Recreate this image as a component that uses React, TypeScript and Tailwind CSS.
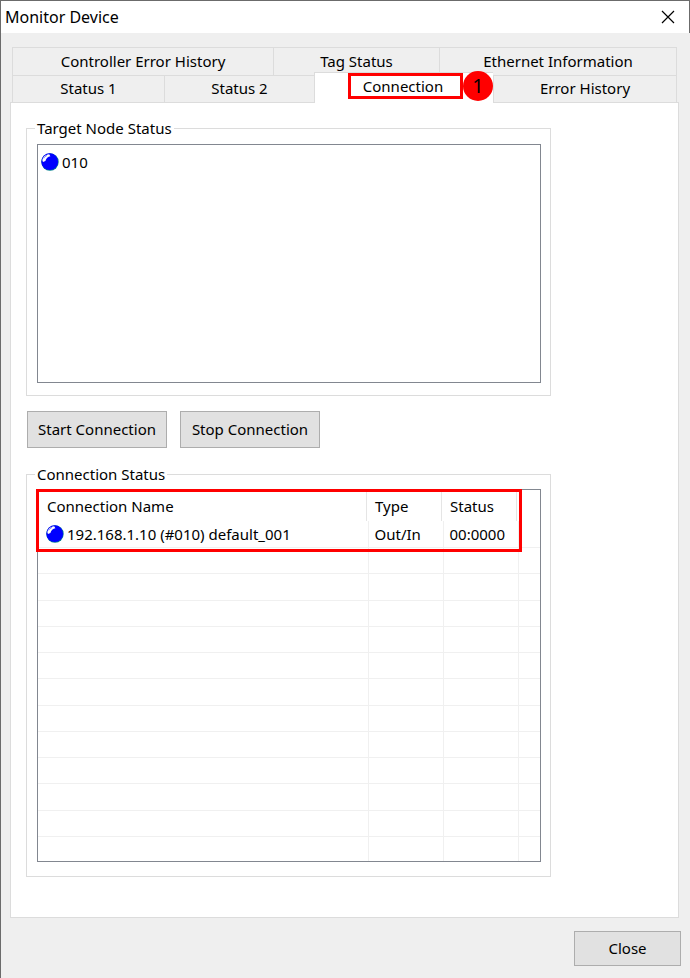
import { useState } from 'react';

const topTabs = ['Controller Error History', 'Tag Status', 'Ethernet Information'];
const bottomTabs = ['Status 1', 'Status 2', 'Connection', 'Error History'];

const nodes = ['010'];

const connections = [
  { name: '192.168.1.10 (#010) default_001', type: 'Out/In', status: '00:0000' },
];

const EMPTY_ROWS = 12;

const StatusBall = () => (
  <svg viewBox="0 0 18 18" className="w-[18px] h-[18px] shrink-0" aria-hidden="true">
    <circle cx="9" cy="9" r="8.7" fill="#007f8c" />
    <circle cx="8.7" cy="8.7" r="8.4" fill="#0000ff" />
    <path d="M1.4 7.6C1.6 4.2 4.2 1.6 8.2 1.3L9.4 3.2C7 3.4 5 5.4 4.4 8L2 9Z" fill="#fff" />
    <path d="M2.8 5.4C3.4 4 4.4 3 6 2.5" fill="none" stroke="#0000ff" strokeWidth="0.5" />
  </svg>
);

type TabProps = {
  label: string;
  selected: boolean;
  onSelect: () => void;
};

const Tab = ({ label, selected, onSelect }: TabProps) => (
  <button
    type="button"
    role="tab"
    aria-selected={selected}
    onClick={onSelect}
    className={
      selected
        ? 'relative z-10 -mt-[3px] -mb-px pb-[5px] pr-[2px] border-t border-l border-[#dcdcdc] bg-white whitespace-nowrap'
        : 'pb-[2px] border-t border-l border-[#dcdcdc] bg-[#efefef] whitespace-nowrap'
    }
  >
    {label}
  </button>
);

const App = () => {
  const [active, setActive] = useState('Connection');

  return (
    <div className="min-h-screen bg-[#efefef] border-t border-l border-[#6b6b6b] text-black text-[15px] leading-5 font-['Noto_Sans','Open_Sans',sans-serif]">
      <header className="flex items-center justify-between h-8 pl-1 pr-[14px] bg-white border-r border-[#6b6b6b]">
        <h1 className="pb-px text-base leading-5">Monitor Device</h1>
        <button type="button" aria-label="Close window">
          <svg viewBox="0 0 14 14" className="w-[14px] h-[14px]" fill="none" stroke="#000" strokeWidth="1.2">
            <path d="M1 1L13 13M13 1L1 13" />
          </svg>
        </button>
      </header>

      <main className="pt-[14px] pl-[9px] pr-[11px]">
        <div role="tablist" className="mx-[2px]">
          <div className="grid grid-cols-[261fr_166fr_237fr] h-7 border-r border-[#dcdcdc]">
            {topTabs.map((tab) => (
              <Tab key={tab} label={tab} selected={active === tab} onSelect={() => setActive(tab)} />
            ))}
          </div>
          <div className="relative grid grid-cols-[152fr_150fr_179fr_183fr] h-[27px] border-r border-[#dcdcdc]">
            {bottomTabs.map((tab) => (
              <Tab key={tab} label={tab} selected={active === tab} onSelect={() => setActive(tab)} />
            ))}
            {/* callout around the Connection tab */}
            <div className="absolute z-20 -top-[2px] left-[336px] w-[115px] h-[26px] border-3 border-[#ff0000] pointer-events-none" />
            <div className="absolute z-20 -top-[4px] left-[451px] flex items-center justify-center w-[30px] h-[30px] rounded-full bg-[#ff0000] text-xl leading-[30px] pointer-events-none">
              1
            </div>
          </div>
        </div>

        <section role="tabpanel" className="bg-white border border-[#dcdcdc] px-[15px] pt-[15px] pb-10">
          <fieldset className="max-w-[525px] border border-[#dcdcdc] pt-[6px] pl-2 pr-[9px] pb-3">
            <legend className="px-[2px]">Target Node Status</legend>
            <ul className="ml-[2px] h-[239px] border border-[#828790] pt-[7px] px-[3px]">
              {nodes.map((node) => (
                <li key={node} className="flex items-center gap-[3px]">
                  <StatusBall />
                  {node}
                </li>
              ))}
            </ul>
          </fieldset>

          <div className="flex gap-[13px] mt-[15px] ml-px">
            <button type="button" className="w-[140px] h-[37px] pb-[2px] bg-[#e1e1e1] border border-[#adadad] whitespace-nowrap">
              Start Connection
            </button>
            <button type="button" className="w-[140px] h-[37px] pb-[2px] bg-[#e1e1e1] border border-[#adadad] whitespace-nowrap">
              Stop Connection
            </button>
          </div>

          <fieldset className="max-w-[525px] mt-4 border border-[#dcdcdc] pt-[5px] pl-2 pr-[9px] pb-[14px]">
            <legend className="px-[2px]">Connection Status</legend>
            <div className="relative ml-[2px] border border-[#828790]">
              <table className="w-full table-fixed border-collapse text-left">
                <colgroup>
                  <col className="w-[330px]" />
                  <col className="w-[75px]" />
                  <col className="w-[75px]" />
                  <col />
                </colgroup>
                <thead>
                  <tr className="h-[31px]">
                    <th className="p-0 pr-px font-normal">
                      <div className="h-[31px] pl-[9px] pt-[6px] border-r border-[#e5e5e5]">Connection Name</div>
                    </th>
                    <th className="p-0 pr-px font-normal">
                      <div className="h-[31px] pl-[7px] pt-[6px] border-r border-[#e5e5e5]">Type</div>
                    </th>
                    <th className="p-0 pr-px font-normal">
                      <div className="h-[31px] pl-[7px] pt-[6px] border-r border-[#e5e5e5]">Status</div>
                    </th>
                    <th className="p-0" />
                  </tr>
                </thead>
                <tbody>
                  {connections.map((row) => (
                    <tr key={row.name} className="h-[26px] border-b border-[#f0f0f0]">
                      <td className="p-0 pl-2 border-r border-[#f0f0f0]">
                        <div className="flex items-center gap-[3px] whitespace-nowrap">
                          <StatusBall />
                          {row.name}
                        </div>
                      </td>
                      <td className="p-0 pl-[6px] border-r border-[#f0f0f0]">{row.type}</td>
                      <td className="p-0 pl-[6px] border-r border-[#f0f0f0]">{row.status}</td>
                      <td className="p-0" />
                    </tr>
                  ))}
                  {Array.from({ length: EMPTY_ROWS }, (_, i) => (
                    <tr key={i} className="h-[26px] nth-[4n+3]:h-[27px] last:h-[25px] border-b border-[#f0f0f0] last:border-b-0">
                      <td className="p-0 border-r border-[#f0f0f0]" />
                      <td className="p-0 border-r border-[#f0f0f0]" />
                      <td className="p-0 border-r border-[#f0f0f0]" />
                      <td className="p-0" />
                    </tr>
                  ))}
                </tbody>
              </table>
              {/* callout around the header and the first connection */}
              <div className="absolute -top-px -left-[2px] w-[486px] h-[63px] border-3 border-[#ff0000] pointer-events-none" />
            </div>
          </fieldset>
        </section>

        <footer className="flex justify-end pt-[13px] pb-3 -mr-[2px]">
          <button type="button" className="w-[107px] h-[35px] pb-[2px] bg-[#e1e1e1] border border-[#adadad]">
            Close
          </button>
        </footer>
      </main>
    </div>
  );
};

export default App;
